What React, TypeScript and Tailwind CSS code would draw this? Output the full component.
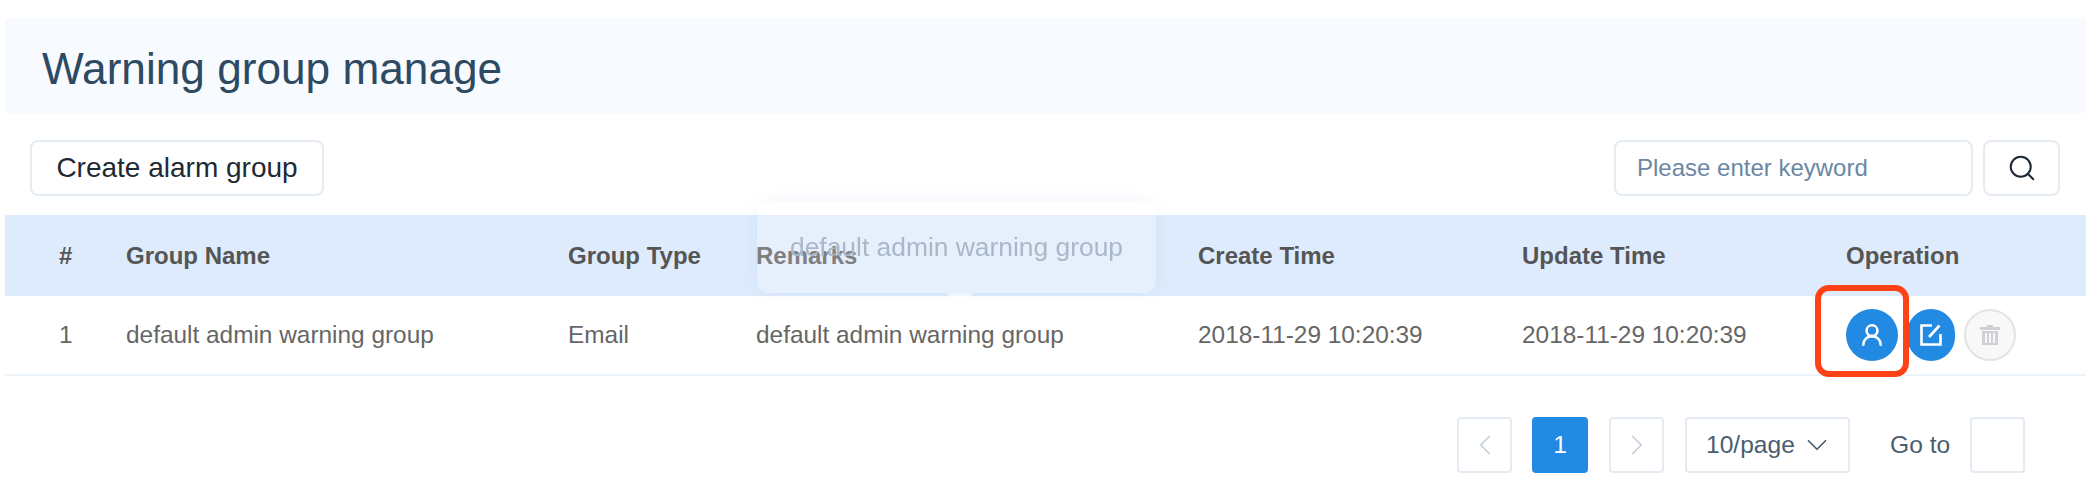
import { ChevronDown, ChevronLeft, ChevronRight, Search, UserRound } from "lucide-react"

const th = "text-left font-bold text-[24px] text-[#555555]"

function EditIcon() {
  return (
    <svg width="24" height="24" viewBox="0 0 24 24" fill="none" stroke="currentColor" strokeWidth="2.6">
      <path d="M13 2.5H2.5v19h19V11" />
      <path d="M10 14 20.5 2.5" />
    </svg>
  )
}

function TrashIcon() {
  return (
    <svg width="24" height="24" viewBox="0 0 24 24" fill="currentColor">
      <rect x="9" y="2" width="6" height="2" />
      <rect x="2" y="4" width="20" height="3" />
      <path d="M4 8h16v14H4zM7 10v10h2V10zM11 10v10h2V10zM15 10v10h2V10z" fillRule="evenodd" />
    </svg>
  )
}

export default function App() {
  return (
    <div className="relative w-[2092px] h-[490px] overflow-hidden bg-white font-['Liberation_Sans',Arial,sans-serif]">
      {/* Title */}
      <div className="pt-[18px] pl-[5px] pr-[6px]">
        <div className="h-[95px] bg-[#f7fafe] rounded-t-sm pl-[37px] pt-[7px] flex items-center">
          <h1 className="text-[44.2px] font-normal text-[#2d4a62]">Warning group manage</h1>
        </div>
      </div>

      {/* Toolbar */}
      <div className="mt-[27px] pl-[30px] pr-[32px] flex justify-between">
        <button className="h-[56px] w-[294px] border-2 border-[#e5ebf3] rounded-lg text-[28px] text-[#1f2933]">
          Create alarm group
        </button>
        <div className="flex gap-[10px]">
          <div className="h-[56px] w-[359px] border-2 border-[#e5ebf3] rounded-lg pl-[21px] flex items-center text-[24px] text-[#6b87a3]">
            Please enter keyword
          </div>
          <button className="h-[56px] w-[77px] border-2 border-[#e5ebf3] rounded-lg flex items-center justify-center text-[#1f2933]">
            <Search size={30} strokeWidth={1.6} />
          </button>
        </div>
      </div>

      {/* Table */}
      <div className="mt-[19px] ml-[5px] mr-[6px]">
        <div className="h-[81px] bg-[#deebfc] grid grid-cols-[121px_442px_188px_442px_324px_324px_1fr] items-center">
          <span className={th + " pl-[54px]"}>#</span>
          <span className={th}>Group Name</span>
          <span className={th}>Group Type</span>
          <span className={th}>Remarks</span>
          <span className={th}>Create Time</span>
          <span className={th}>Update Time</span>
          <span className={th}>Operation</span>
        </div>
        <div className="h-[80px] border-b-2 border-[#edf3fb] grid grid-cols-[121px_442px_188px_442px_324px_324px_1fr] items-center text-[24.4px] text-[#666666]">
          <span className="pl-[54px]">1</span>
          <span>default admin warning group</span>
          <span>Email</span>
          <span>default admin warning group</span>
          <span>2018-11-29 10:20:39</span>
          <span>2018-11-29 10:20:39</span>
          <div className="flex items-center">
            <button className="w-[52px] h-[52px] rounded-full bg-[#228ae2] text-white flex items-center justify-center">
              <UserRound size={26} strokeWidth={2.4} />
            </button>
            <button className="ml-[9px] w-[48px] h-[52px] rounded-full bg-[#228ae2] text-white flex items-center justify-center">
              <EditIcon />
            </button>
            <button className="ml-[9px] w-[52px] h-[52px] rounded-full bg-[#f8f8f8] border-2 border-[#e4e4e4] text-[#cfd0d6] flex items-center justify-center">
              <TrashIcon />
            </button>
          </div>
        </div>
      </div>

      {/* Pagination */}
      <div className="mt-[41px] flex items-center pl-[1457px] text-[24.6px] text-[#4a5d70]">
        <div className="w-[55px] h-[56px] border-2 border-[#e5ebf3] rounded flex items-center justify-center text-[#c3cfdb]">
          <ChevronLeft size={34} strokeWidth={1.2} />
        </div>
        <div className="ml-[20px] w-[56px] h-[56px] rounded bg-[#228ae2] text-white flex items-center justify-center">1</div>
        <div className="ml-[21px] w-[55px] h-[56px] border-2 border-[#e5ebf3] rounded flex items-center justify-center text-[#c3cfdb]">
          <ChevronRight size={34} strokeWidth={1.2} />
        </div>
        <div className="ml-[21px] w-[165px] h-[56px] border-2 border-[#e5ebf3] rounded flex items-center justify-between pl-[19px] pr-[14px]">
          <span>10/page</span>
          <ChevronDown size={34} strokeWidth={1.2} />
        </div>
        <span className="ml-[40px]">Go to</span>
        <div className="ml-[20px] w-[55px] h-[56px] border-2 border-[#e5ebf3] rounded" />
      </div>

      {/* Tooltip over the Remarks header */}
      <div className="absolute left-[757px] top-[201px] w-[399px] h-[92px] rounded-xl bg-white/25 backdrop-blur-[0.5px] shadow-[0_0_16px_rgba(120,160,220,0.10)] flex justify-center pt-[30px] text-[26.4px] leading-[32px] text-[#a9b7c8]">
        default admin warning group
      </div>
      <div className="absolute left-[946px] top-[293px] w-0 h-0 border-x-[14px] border-x-transparent border-t-[10px] border-t-white/60" />

      {/* Red highlight around the member button */}
      <div className="absolute left-[1815px] top-[285px] w-[94px] h-[92px] border-[6px] border-[#ff4116] rounded-[14px]" />
    </div>
  )
}
